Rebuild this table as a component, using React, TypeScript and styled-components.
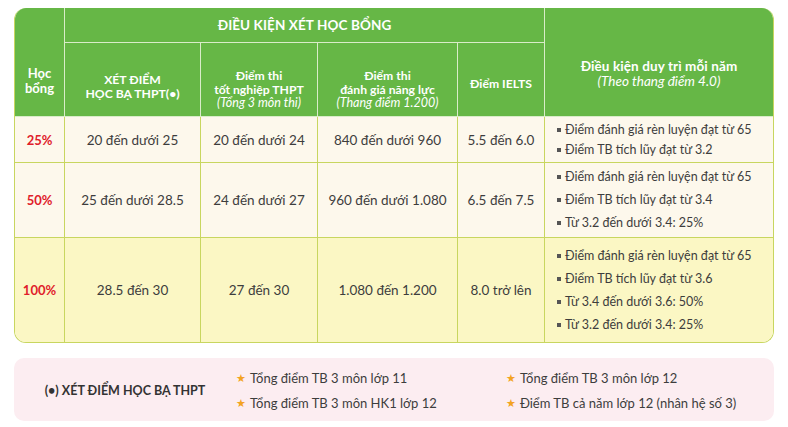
import styled, { createGlobalStyle } from 'styled-components';

const GlobalStyle = createGlobalStyle`
  html, body {
    margin: 0;
    padding: 0;
    background: #ffffff;
  }
  body {
    font-family: Lato, "Noto Sans", "DejaVu Sans", sans-serif;
    color: #3b3b3b;
  }
`;

const GREEN = '#66b746';
const HEAD_LINE = '#d9ecc9';
const BODY_LINE = '#c8d65f';

const Page = styled.div`
  width: 788px;
  height: 427px;
  padding: 8px 14px 0 14px;
  box-sizing: border-box;
  display: flex;
  flex-direction: column;
  gap: 15px;
`;

const Table = styled.div`
  display: grid;
  grid-template-columns: 50px 136px 117px 140px 87px 1fr;
  grid-template-rows: 35px 74px 46px 75px 1fr;
  width: 760px;
  height: 335px;
  box-sizing: border-box;
  border: 1.5px solid ${BODY_LINE};
  border-top: none;
  border-radius: 12px;
  overflow: hidden;
`;

const HeadCell = styled.div<{ $rows?: number; $cols?: number; $last?: boolean; $push?: number }>`
  grid-row: span ${(p) => p.$rows ?? 1};
  grid-column: span ${(p) => p.$cols ?? 1};
  background: ${GREEN};
  color: #ffffff;
  font-weight: 700;
  font-size: 12.2px;
  line-height: 13.5px;
  text-align: center;
  display: flex;
  flex-direction: column;
  align-items: center;
  justify-content: center;
  box-sizing: border-box;
  padding-top: ${(p) => p.$push ?? 0}px;
  border-right: ${(p) => (p.$last ? 'none' : `1.5px solid ${HEAD_LINE}`)};
  border-bottom: 1.5px solid ${HEAD_LINE};
`;

const Title = styled.span`
  font-size: 13.5px;
  line-height: 15px;
  letter-spacing: 0.1px;
`;

const Word = styled.span`
  font-size: 13px;
  line-height: 15px;
`;

const Note = styled.span<{ $size?: number }>`
  font-weight: 400;
  font-style: italic;
  font-size: ${(p) => p.$size ?? 12.5}px;
  line-height: 14px;
`;

const Cell = styled.div<{ $yellow?: boolean; $last?: boolean; $lastRow?: boolean; $left?: boolean }>`
  background: ${(p) => (p.$yellow ? '#fbf7c4' : '#fdf8ec')};
  border-right: ${(p) => (p.$last ? 'none' : `1px solid ${BODY_LINE}`)};
  border-bottom: ${(p) => (p.$lastRow ? 'none' : `1px solid ${BODY_LINE}`)};
  display: flex;
  align-items: center;
  justify-content: ${(p) => (p.$left ? 'flex-start' : 'center')};
  padding-left: ${(p) => (p.$left ? '12px' : '0')};
  font-size: 13.5px;
  color: #3d3d3d;
`;

const Percent = styled.span`
  color: #e0202a;
  font-weight: 700;
  font-size: 13px;
`;

const Bullets = styled.ul<{ $tight?: boolean }>`
  list-style: none;
  margin: 0;
  padding: 0;
  display: flex;
  flex-direction: column;
  gap: ${(p) => (p.$tight ? '4px' : '7px')};
`;

const Bullet = styled.li`
  display: flex;
  align-items: center;
  gap: 4px;
  font-size: 12.5px;
  line-height: 16px;
  color: #3d3d3d;
  &::before {
    content: '';
    width: 4px;
    height: 4px;
    background: #555555;
    flex: none;
  }
`;

const NoteBox = styled.div`
  display: grid;
  grid-template-columns: 222px 270px 1fr;
  grid-template-rows: 1fr 1fr;
  align-items: center;
  width: 760px;
  height: 63px;
  padding: 8px 0 6px;
  box-sizing: border-box;
  background: #fcedf1;
  border-radius: 10px;
`;

const NoteLabel = styled.div`
  grid-row: span 2;
  text-align: center;
  font-weight: 700;
  font-size: 12.5px;
  color: #333333;
`;

const Star = styled.div`
  display: flex;
  align-items: center;
  gap: 4px;
  font-size: 13px;
  color: #3d3d3d;
  &::before {
    content: '★';
    color: #f3a322;
    font-size: 11px;
  }
`;

type Row = {
  pct: string;
  hocBa: string;
  tn: string;
  dgnl: string;
  ielts: string;
  keep: string[];
  yellow?: boolean;
};

const rows: Row[] = [
  {
    pct: '25%',
    hocBa: '20 đến dưới 25',
    tn: '20 đến dưới 24',
    dgnl: '840 đến dưới 960',
    ielts: '5.5 đến 6.0',
    keep: ['Điểm đánh giá rèn luyện đạt từ 65', 'Điểm TB tích lũy đạt từ 3.2'],
  },
  {
    pct: '50%',
    hocBa: '25 đến dưới 28.5',
    tn: '24 đến dưới 27',
    dgnl: '960 đến dưới 1.080',
    ielts: '6.5 đến 7.5',
    keep: ['Điểm đánh giá rèn luyện đạt từ 65', 'Điểm TB tích lũy đạt từ 3.4', 'Từ 3.2 đến dưới 3.4: 25%'],
  },
  {
    pct: '100%',
    hocBa: '28.5 đến 30',
    tn: '27 đến 30',
    dgnl: '1.080 đến 1.200',
    ielts: '8.0 trở lên',
    keep: [
      'Điểm đánh giá rèn luyện đạt từ 65',
      'Điểm TB tích lũy đạt từ 3.6',
      'Từ 3.4 đến dưới 3.6: 50%',
      'Từ 3.2 đến dưới 3.4: 25%',
    ],
    yellow: true,
  },
];

export default function App() {
  return (
    <>
      <GlobalStyle />
      <Page>
        <Table>
          <HeadCell $rows={2} $push={38}>
            <Word>Học</Word>
            <Word>bổng</Word>
          </HeadCell>
          <HeadCell $cols={4}>
            <Title>ĐIỀU KIỆN XÉT HỌC BỔNG</Title>
          </HeadCell>
          <HeadCell $rows={2} $last $push={22}>
            <Title>Điều kiện duy trì mỗi năm</Title>
            <Note $size={13.5}>(Theo thang điểm 4.0)</Note>
          </HeadCell>
          <HeadCell $push={14}>
            <span>XÉT ĐIỂM</span>
            <span>HỌC BẠ THPT(•)</span>
          </HeadCell>
          <HeadCell $push={20}>
            <span>Điểm thi</span>
            <span>tốt nghiệp THPT</span>
            <Note>(Tổng 3 môn thi)</Note>
          </HeadCell>
          <HeadCell $push={20}>
            <span>Điểm thi</span>
            <span>đánh giá năng lực</span>
            <Note>(Thang điểm 1.200)</Note>
          </HeadCell>
          <HeadCell $push={8}>
            <span>Điểm IELTS</span>
          </HeadCell>

          {rows.map((r, i) => {
            const lastRow = i === rows.length - 1;
            return [
              <Cell key={`${i}-p`} $yellow={r.yellow} $lastRow={lastRow}>
                <Percent>{r.pct}</Percent>
              </Cell>,
              <Cell key={`${i}-h`} $yellow={r.yellow} $lastRow={lastRow}>
                {r.hocBa}
              </Cell>,
              <Cell key={`${i}-t`} $yellow={r.yellow} $lastRow={lastRow}>
                {r.tn}
              </Cell>,
              <Cell key={`${i}-d`} $yellow={r.yellow} $lastRow={lastRow}>
                {r.dgnl}
              </Cell>,
              <Cell key={`${i}-i`} $yellow={r.yellow} $lastRow={lastRow}>
                {r.ielts}
              </Cell>,
              <Cell key={`${i}-k`} $yellow={r.yellow} $lastRow={lastRow} $last $left>
                <Bullets $tight={i === 0}>
                  {r.keep.map((k) => (
                    <Bullet key={k}>{k}</Bullet>
                  ))}
                </Bullets>
              </Cell>,
            ];
          })}
        </Table>

        <NoteBox>
          <NoteLabel>(•) XÉT ĐIỂM HỌC BẠ THPT</NoteLabel>
          <Star>Tổng điểm TB 3 môn lớp 11</Star>
          <Star>Tổng điểm TB 3 môn lớp 12</Star>
          <Star>Tổng điểm TB 3 môn HK1 lớp 12</Star>
          <Star>Điểm TB cả năm lớp 12 (nhân hệ số 3)</Star>
        </NoteBox>
      </Page>
    </>
  );
}
